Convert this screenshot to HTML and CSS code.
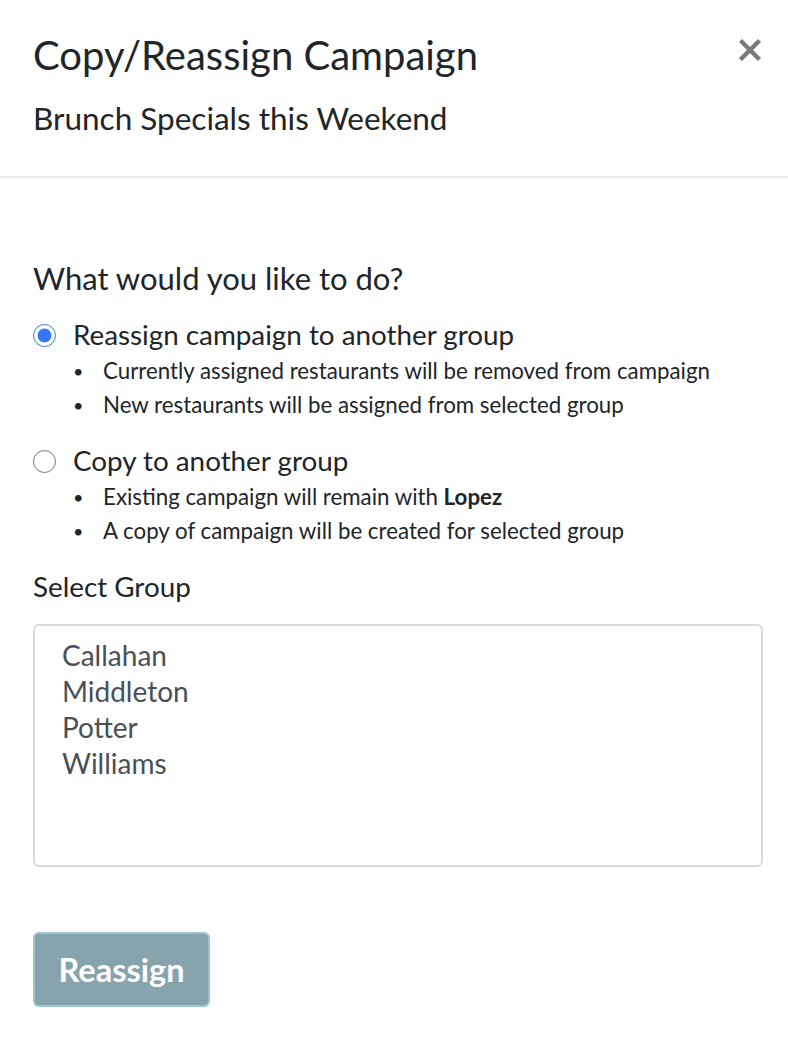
FILE: index.html
```html
<!DOCTYPE html>
<html lang="en">
<head>
  <meta charset="UTF-8">
  <meta name="viewport" content="width=device-width, initial-scale=1.0">
  <title>Copy/Reassign Campaign</title>
  <link rel="stylesheet" href="styles.css">
</head>
<body>

  <div class="modal">
    <div class="modal-header">
      <div class="titles">
        <h1>Copy/Reassign Campaign</h1>
        <h2>Brunch Specials this Weekend</h2>
      </div>
      <button class="close" aria-label="Close">
        <svg width="24" height="24" viewBox="0 0 24 24"><path d="M2.5 2.5 L21.5 21.5 M21.5 2.5 L2.5 21.5" stroke="#7a7a7a" stroke-width="4.4"/></svg>
      </button>
    </div>

    <div class="modal-body">
      <h3>What would you like to do?</h3>

      <label class="option">
        <input type="radio" name="acao" checked>
        <span>Reassign campaign to another group</span>
      </label>
      <ul>
        <li>Currently assigned restaurants will be removed from campaign</li>
        <li>New restaurants will be assigned from selected group</li>
      </ul>

      <label class="option">
        <input type="radio" name="acao">
        <span>Copy to another group</span>
      </label>
      <ul>
        <li>Existing campaign will remain with <b>Lopez</b></li>
        <li>A copy of campaign will be created for selected group</li>
      </ul>

      <div class="field-label">Select Group</div>
      <div class="group-list">
        <div>Callahan</div>
        <div>Middleton</div>
        <div>Potter</div>
        <div>Williams</div>
      </div>

      <button class="btn-reassign" disabled>Reassign</button>
    </div>
  </div>

</body>
</html>
```

FILE: styles.css
```css
body {
  margin: 0;
  font-family: Lato, "Open Sans", sans-serif;
  color: #212529;
  background: white;
}
.modal {
  width: 788px;
}
.modal-header {
  display: flex;
  justify-content: space-between;
  align-items: flex-start;
  padding: 30px 26px 0 33px;
  height: 146px;
  border-bottom: 2px solid #e9e9ee;
}
h1 {
  margin: 0;
  font-size: 40px;
  font-weight: 400;
  line-height: 50px;
}
h2 {
  margin: 18px 0 0;
  font-size: 31.5px;
  font-weight: 400;
  line-height: 40px;
}
.close {
  background: none;
  border: none;
  padding: 0;
  margin-top: 8px;
  cursor: pointer;
}
.modal-body {
  padding: 80px 25px 0 33px;
}
h3 {
  margin: 0 0 19px;
  font-size: 31px;
  font-weight: 400;
  line-height: 40px;
}
.option {
  display: flex;
  align-items: center;
  gap: 17px;
  font-size: 27.8px;
  line-height: 36px;
}
.option input {
  margin: 0;
  width: 23px;
  height: 23px;
  accent-color: #3478f6;
}
ul {
  margin: 0 0 21px;
  padding: 1px 0 0 40px;
  list-style: none;
  font-size: 22.3px;
  line-height: 34px;
}
li {
  display: flex;
}
li::before {
  content: "•";
  width: 30px;
  font-size: 18px;
}
li b {
  margin-left: 0.25em;
}
.field-label {
  margin-top: 6px;
  font-size: 27.8px;
  line-height: 36px;
}
.group-list {
  margin-top: 19px;
  height: 217px;
  border: 2px solid #d6dadd;
  border-radius: 6px;
  padding: 11px 27px;
  font-size: 28px;
  line-height: 36px;
  color: #495057;
}
.btn-reassign {
  margin-top: 65px;
  width: 177px;
  height: 75px;
  background: #87a3ad;
  border: 2px solid #9dc3d0;
  border-radius: 6px;
  color: white;
  font-family: Lato, sans-serif;
  font-weight: 700;
  font-size: 32.5px;
}
```
